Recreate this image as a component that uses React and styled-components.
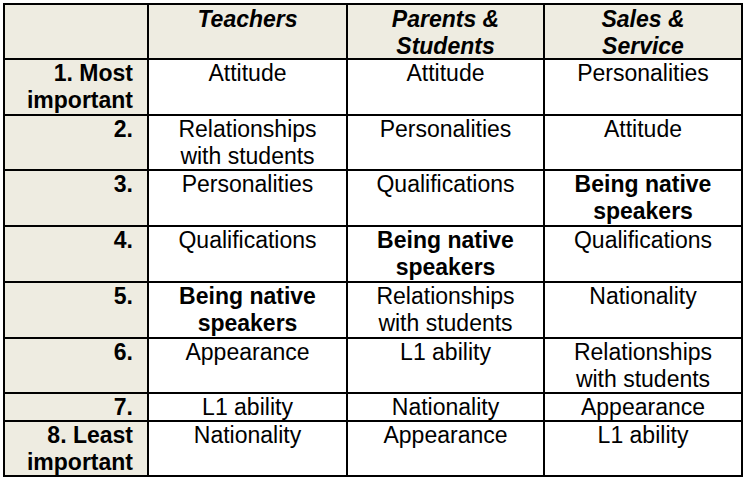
import React from "react";
import styled, { createGlobalStyle } from "styled-components";

const Global = createGlobalStyle`
  html, body { margin: 0; padding: 0; background: #ffffff; }
  body { font-family: "Liberation Sans", Arial, sans-serif; }
`;

const Page = styled.div`
  padding: 3px 0 0 3px;
`;

const Table = styled.div`
  display: grid;
  grid-template-columns: 142px 197px 195px 196px;
  grid-template-rows: 53px 54px 53px 54px 54px 54px 53px 26px 53px;
  gap: 2px;
  padding: 2px;
  background: #000000;
  width: max-content;
`;

const Cell = styled.div`
  background: ${(p) => (p.$shade ? "#eeece1" : "#ffffff")};
  color: #000000;
  font-family: "Liberation Sans", Arial, sans-serif;
  font-size: 23px;
  line-height: 27px;
  font-weight: ${(p) => (p.$bold ? 700 : 400)};
  font-style: ${(p) => (p.$italic ? "italic" : "normal")};
  text-align: ${(p) => (p.$right ? "right" : "center")};
  padding: ${(p) => (p.$right ? "0 14px 0 4px" : "0 4px")};
  padding-top: ${(p) => (p.$head ? "1px" : "0")};
  overflow: hidden;
`;

const headers = ["", "Teachers", ["Parents &", "Students"], ["Sales &", "Service"]];

const rows = [
  [["1. Most", "important"], "Attitude", "Attitude", "Personalities"],
  ["2.", ["Relationships", "with students"], "Personalities", "Attitude"],
  ["3.", "Personalities", "Qualifications", { b: ["Being native", "speakers"] }],
  ["4.", "Qualifications", { b: ["Being native", "speakers"] }, "Qualifications"],
  ["5.", { b: ["Being native", "speakers"] }, ["Relationships", "with students"], "Nationality"],
  ["6.", "Appearance", "L1 ability", ["Relationships", "with students"]],
  ["7.", "L1 ability", "Nationality", "Appearance"],
  [["8. Least", "important"], "Nationality", "Appearance", "L1 ability"],
];

const Lines = ({ value }) => {
  const arr = Array.isArray(value) ? value : [value];
  return arr.map((t, i) => (
    <React.Fragment key={i}>
      {i > 0 && <br />}
      {t}
    </React.Fragment>
  ));
};

export default function App() {
  return (
    <>
      <Global />
      <Page>
        <Table>
          {headers.map((h, i) => (
            <Cell key={`h${i}`} $shade $bold $italic $head>
              <Lines value={h} />
            </Cell>
          ))}
          {rows.map((r, ri) =>
            r.map((c, ci) => {
              if (ci === 0) {
                return (
                  <Cell key={`${ri}-${ci}`} $shade $bold $right>
                    <Lines value={c} />
                  </Cell>
                );
              }
              const bold = c && typeof c === "object" && !Array.isArray(c);
              return (
                <Cell key={`${ri}-${ci}`} $bold={bold}>
                  <Lines value={bold ? c.b : c} />
                </Cell>
              );
            })
          )}
        </Table>
      </Page>
    </>
  );
}
